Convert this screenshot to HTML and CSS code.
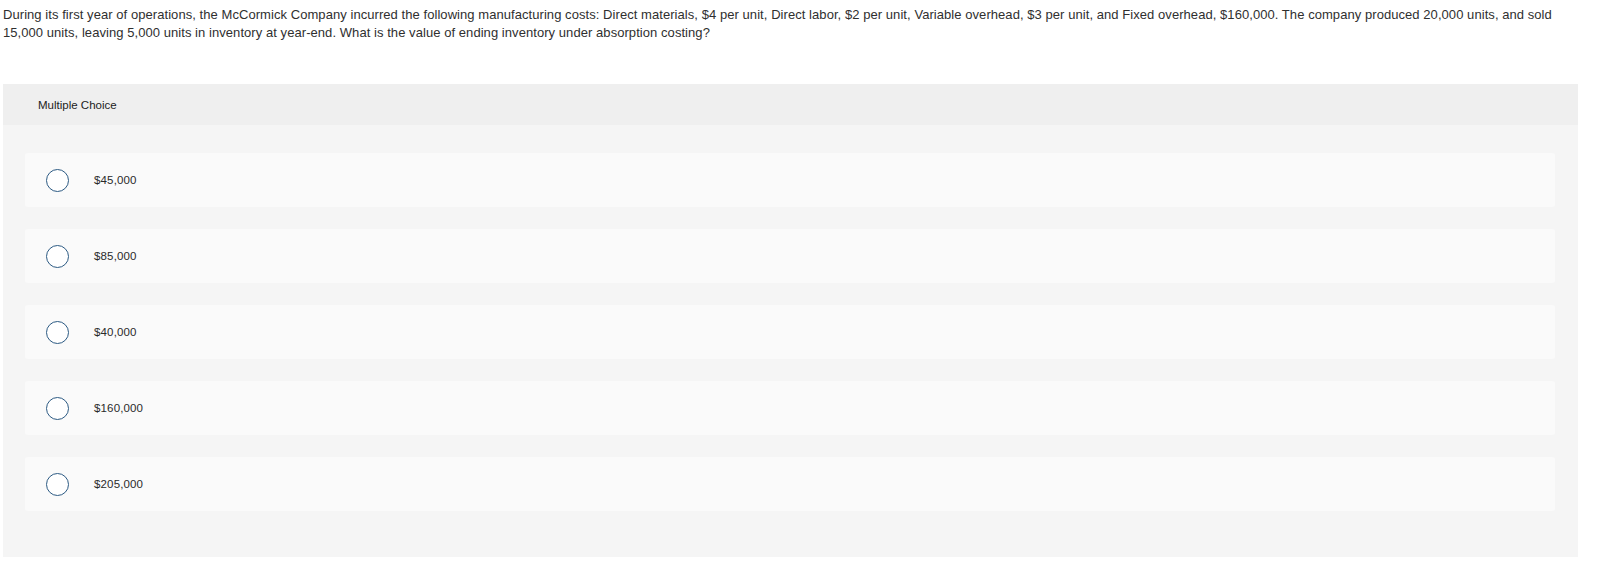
FILE: index.html
```html
<!DOCTYPE html>
<html lang="en">
<head>
<meta charset="utf-8">
<title>Multiple Choice</title>
<link rel="stylesheet" href="styles.css">
</head>
<body>
<p class="question">During its first year of operations, the McCormick Company incurred the following manufacturing costs: Direct materials, $4 per unit, Direct labor, $2 per unit, Variable overhead, $3 per unit, and Fixed overhead, $160,000. The company produced 20,000 units, and sold 15,000 units, leaving 5,000 units in inventory at year-end. What is the value of ending inventory under absorption costing?</p>
<section class="panel">
  <div class="panel-head">Multiple Choice</div>
  <div class="panel-body">
    <label class="option"><span class="radio"></span><span class="opt-text">$45,000</span></label>
    <label class="option"><span class="radio"></span><span class="opt-text">$85,000</span></label>
    <label class="option"><span class="radio"></span><span class="opt-text">$40,000</span></label>
    <label class="option"><span class="radio"></span><span class="opt-text">$160,000</span></label>
    <label class="option"><span class="radio"></span><span class="opt-text">$205,000</span></label>
  </div>
</section>
</body>
</html>
```

FILE: styles.css
```css
html, body {
  margin: 0;
  padding: 0;
  background: #ffffff;
}
body {
  font-family: "Liberation Sans", Arial, sans-serif;
  color: #333333;
}
.question {
  margin: 0;
  padding: 6px 25px 0 3px;
  font-size: 13px;
  line-height: 18px;
  letter-spacing: 0.06px;
  color: #2f2f2f;
}
.panel {
  margin: 42px 25px 0 3px;
  background: #f5f5f5;
}
.panel-head {
  height: 41px;
  display: flex;
  align-items: center;
  padding-left: 35px;
  background: #efefef;
  font-size: 11.5px;
  color: #222222;
}
.panel-body {
  display: flex;
  flex-direction: column;
  gap: 22px;
  padding: 28px 23px 46px 22px;
}
.option {
  height: 54px;
  display: flex;
  align-items: center;
  padding-left: 21px;
  gap: 25px;
  background: #fafafa;
  border-radius: 3px;
  cursor: pointer;
}
.radio {
  width: 23px;
  height: 23px;
  box-sizing: border-box;
  border: 1.5px solid #2c5a83;
  border-radius: 50%;
  background: #ffffff;
  flex: none;
}
.opt-text {
  font-size: 11.5px;
  letter-spacing: 0.15px;
  color: #2a2a2a;
}
```
